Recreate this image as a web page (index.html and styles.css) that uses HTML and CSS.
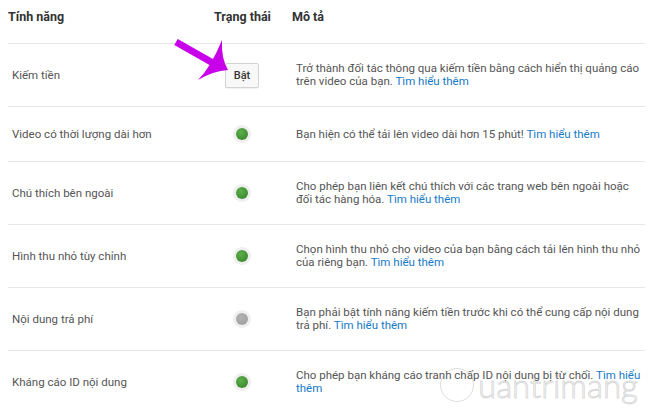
FILE: index.html
```html
<!DOCTYPE html>
<html lang="vi">
<head>
<meta charset="utf-8">
<title>Tính năng</title>
<link rel="stylesheet" href="styles.css">
</head>
<body>
<div class="page">
  <table class="features">
    <colgroup>
      <col class="col-name">
      <col class="col-status">
      <col class="col-desc">
    </colgroup>
    <thead>
      <tr>
        <th class="c-name">Tính năng</th>
        <th class="c-status">Trạng thái</th>
        <th class="c-desc">Mô tả</th>
      </tr>
    </thead>
    <tbody>
      <tr>
        <td class="c-name">Kiếm tiền</td>
        <td class="c-status"><button class="btn">Bật</button></td>
        <td class="c-desc">Trở thành đối tác thông qua kiếm tiền bằng cách hiển thị quảng cáo trên video của bạn. <a href="#">Tìm hiểu thêm</a></td>
      </tr>
      <tr>
        <td class="c-name">Video có thời lượng dài hơn</td>
        <td class="c-status"><span class="dot on"></span></td>
        <td class="c-desc">Bạn hiện có thể tải lên video dài hơn 15 phút! <a href="#">Tìm hiểu thêm</a></td>
      </tr>
      <tr>
        <td class="c-name">Chú thích bên ngoài</td>
        <td class="c-status"><span class="dot on"></span></td>
        <td class="c-desc">Cho phép bạn liên kết chú thích với các trang web bên ngoài hoặc đối tác hàng hóa. <a href="#">Tìm hiểu thêm</a></td>
      </tr>
      <tr>
        <td class="c-name">Hình thu nhỏ tùy chỉnh</td>
        <td class="c-status"><span class="dot on"></span></td>
        <td class="c-desc">Chọn hình thu nhỏ cho video của bạn bằng cách tải lên hình thu nhỏ của riêng bạn. <a href="#">Tìm hiểu thêm</a></td>
      </tr>
      <tr>
        <td class="c-name">Nội dung trả phí</td>
        <td class="c-status"><span class="dot off"></span></td>
        <td class="c-desc">Bạn phải bật tính năng kiếm tiền trước khi có thể cung cấp nội dung trả phí. <a href="#">Tìm hiểu thêm</a></td>
      </tr>
      <tr>
        <td class="c-name">Kháng cáo ID nội dung</td>
        <td class="c-status"><span class="dot on"></span></td>
        <td class="c-desc">Cho phép bạn kháng cáo tranh chấp ID nội dung bị từ chối. <a href="#">Tìm hiểu thêm</a></td>
      </tr>
    </tbody>
  </table>

  <svg class="arrow" width="70" height="50" viewBox="170 36 70 50" aria-hidden="true">
    <line x1="176" y1="42" x2="213" y2="63" stroke="#c800ea" stroke-width="7" stroke-linecap="butt"/>
    <path d="M222,40 Q221,58 228,70 Q213,71 198,80 Q211,67 222,40 Z" fill="#c800ea"/>
  </svg>

  <div class="watermark" aria-hidden="true"><span class="wm-logo"></span><span class="wm-text">uantrimang</span></div>
</div>
</body>
</html>
```

FILE: styles.css
```css
html, body {
  margin: 0;
  padding: 0;
  background: #ffffff;
}

body {
  font-family: Roboto, "Noto Sans", Arial, sans-serif;
  color: #555555;
  width: 650px;
  height: 408px;
  overflow: hidden;
}

.page {
  position: relative;
  width: 650px;
  height: 408px;
  overflow: hidden;
}

.features {
  margin-left: 8px;
  width: 637px;
  border-collapse: collapse;
  table-layout: fixed;
}

.col-name { width: 206px; }
.col-status { width: 56px; }
.col-desc { width: 375px; }

.features th {
  font-size: 12.5px;
  font-weight: bold;
  color: #333333;
  line-height: 16px;
  padding: 9px 0 18px;
  text-align: left;
  border-bottom: 1px solid #e6e6e6;
  white-space: nowrap;
}

.features th.c-status {
  text-align: center;
}

.features th.c-desc {
  padding-left: 22px;
}

.features td {
  font-size: 11.5px;
  line-height: 13px;
  padding: 18px 0;
  border-bottom: 1px solid #e6e6e6;
  vertical-align: middle;
  color: #555555;
}

.features td.c-name {
  padding-left: 4px;
}

.features td.c-status {
  text-align: center;
  line-height: 0;
}

.features td.c-desc {
  padding-left: 26px;
  padding-right: 2px;
}

.features a {
  color: #167ac6;
  text-decoration: none;
}

.btn {
  display: inline-block;
  width: 34px;
  height: 25px;
  padding: 0;
  margin: -6px 0;
  border: 1px solid #d3d3d3;
  border-radius: 2px;
  background: #f8f8f8;
  box-shadow: 0 1px 0 rgba(0, 0, 0, 0.05);
  font-family: Roboto, Arial, sans-serif;
  font-size: 11px;
  font-weight: 500;
  color: #333333;
  line-height: 23px;
}

.dot {
  display: inline-block;
  width: 12px;
  height: 12px;
  margin: 3px 0;
  border-radius: 50%;
  box-shadow: 0 0 0 3px #efefef;
}

.dot.on {
  background: radial-gradient(circle at 40% 35%, #5cae4a 0%, #3f8e32 70%, #367f2b 100%);
}

.dot.off {
  background: radial-gradient(circle at 40% 35%, #b2b2b2 0%, #a2a2a2 70%, #999999 100%);
}

.arrow {
  position: absolute;
  left: 170px;
  top: 36px;
  pointer-events: none;
}

.watermark {
  position: absolute;
  left: 440px;
  top: 366px;
  display: flex;
  align-items: center;
  gap: 4px;
  pointer-events: none;
}

.wm-logo {
  width: 32px;
  height: 32px;
  border-radius: 50%;
  border: 1.5px solid rgba(160, 160, 160, 0.35);
}

.wm-text {
  font-family: Lato, sans-serif;
  font-weight: 300;
  font-size: 33px;
  line-height: 38px;
  color: transparent;
  -webkit-text-stroke: 1px rgba(160, 160, 160, 0.4);
}
```
